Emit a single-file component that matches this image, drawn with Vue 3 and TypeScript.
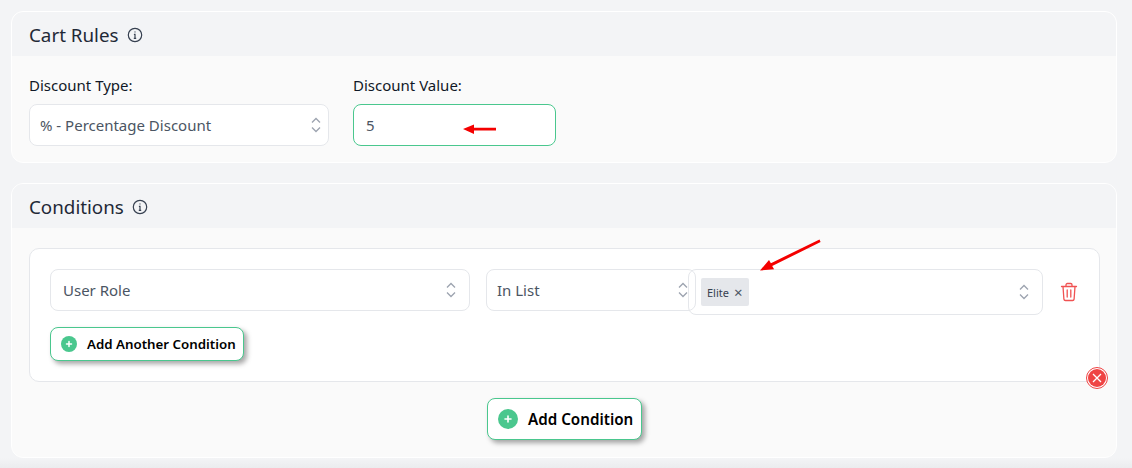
<script setup lang="ts">
const chevron = "M4 6.5 8 2.5l4 4M4 11.5l4 4 4-4";
</script>

<template>
  <div class="page">
    <section class="card first">
      <header class="card-head">
        <h2>Cart Rules</h2>
        <svg class="info" viewBox="0 0 16 16" fill="none" stroke="#374151" stroke-width="1.2">
          <circle cx="8" cy="8" r="6.7" />
          <path d="M6.9 7.3H8v4M6.8 11.3h2.4" />
          <circle cx="8" cy="4.9" r=".6" fill="#374151" stroke="none" />
        </svg>
      </header>
      <div class="card-body discount">
        <div class="field type">
          <label>Discount Type:</label>
          <div class="control select">
            <span>% - Percentage Discount</span>
            <svg class="chev" viewBox="0 0 16 18" fill="none" stroke="#9ca3af" stroke-width="1.3"><path :d="chevron" /></svg>
          </div>
        </div>
        <div class="field value">
          <label>Discount Value:</label>
          <div class="control input"><span>5</span></div>
        </div>
      </div>
    </section>

    <section class="card second">
      <header class="card-head">
        <h2>Conditions</h2>
        <svg class="info" viewBox="0 0 16 16" fill="none" stroke="#374151" stroke-width="1.2">
          <circle cx="8" cy="8" r="6.7" />
          <path d="M6.9 7.3H8v4M6.8 11.3h2.4" />
          <circle cx="8" cy="4.9" r=".6" fill="#374151" stroke="none" />
        </svg>
      </header>
      <div class="card-body conditions">
        <div class="group">
          <div class="row">
            <div class="control select role">
              <span>User Role</span>
              <svg class="chev" viewBox="0 0 16 18" fill="none" stroke="#9ca3af" stroke-width="1.3"><path :d="chevron" /></svg>
            </div>
            <div class="control select op">
              <span>In List</span>
              <svg class="chev" viewBox="0 0 16 18" fill="none" stroke="#9ca3af" stroke-width="1.3"><path :d="chevron" /></svg>
            </div>
            <div class="control multi">
              <span class="tag">Elite <i class="x">×</i></span>
              <svg class="chev" viewBox="0 0 16 18" fill="none" stroke="#9ca3af" stroke-width="1.3"><path :d="chevron" /></svg>
            </div>
            <svg class="trash" viewBox="0 0 18 20" fill="none" stroke="#f05252" stroke-width="1.3" stroke-linecap="round" stroke-linejoin="round">
              <path d="M1.5 4.5h15M6 4.5V2.8C6 2 6.6 1.5 7.3 1.5h3.4c.7 0 1.300.5 1.300 1.300v1.700M3 4.500l.9 12.600c.1.800.7 1.400 1.500 1.400h7.200c.8 0 1.400-.6 1.500-1.400L15 4.500M7.200 8v7M10.800 8v7" />
            </svg>
          </div>
          <button class="btn small" type="button">
            <span class="plus"><svg viewBox="0 0 16 16"><path d="M8 5.500v5M5.500 8h5" stroke="#fff" stroke-width="1.500" stroke-linecap="round" /></svg></span>
            Add Another Condition
          </button>
          <span class="remove">
            <svg viewBox="0 0 24 24" fill="none">
              <circle cx="12" cy="12" r="10.500" fill="#fff" stroke="#ef4444" />
              <circle cx="12" cy="12" r="9" fill="#ef4444" />
              <path d="m8 8 8 8M16 8l-8 8" stroke="#fff" stroke-width="1.300" />
            </svg>
          </span>
        </div>
        <button class="btn large" type="button">
          <span class="plus"><svg viewBox="0 0 20 20"><path d="M10 7v6M7 10h6" stroke="#fff" stroke-width="1.600" stroke-linecap="round" /></svg></span>
          Add Condition
        </button>
      </div>
    </section>

    <svg class="annot" viewBox="0 0 1132 468" fill="#f40000">
      <path d="M463 129l11-4.500v3.300h22v2.800h-22v3.300z" />
      <path d="M760 270.500l9-10.500 1.900 3.200 48.600-23.700 1.100 2.400-48.400 24.200 1.900 3.100z" />
    </svg>
  </div>
</template>

<style>
html, body { margin: 0; background: #f3f4f6; }
</style>

<style scoped>
.page {
  position: relative;
  width: 1132px;
  height: 468px;
  overflow: hidden;
  box-sizing: border-box;
  padding: 11px 15px 0 11px;
  background: linear-gradient(#f3f4f6 458px, #ebecee 468px);
  font-family: "Noto Sans", "Open Sans", sans-serif;
  color: #111827;
}
.card {
  border: 1px solid #fff;
  border-radius: 12px;
  overflow: hidden;
  background: #fafafa;
}
.first { height: 152px; box-sizing: border-box; }
.second { height: 275px; box-sizing: border-box; margin-top: 20px; overflow: visible; }
.card-head {
  height: 44px;
  box-sizing: border-box;
  display: flex;
  align-items: center;
  gap: 8px;
  padding: 1px 0 0 17px;
  background: #f3f4f6;
  border-radius: 11px 11px 0 0;
}
h2 { margin: 0; font-size: 18.800px; font-weight: 400; line-height: 24px; color: #1f2937; }
.info { width: 16px; height: 16px; }
.card-body { padding: 0 16px 0 17px; }
.discount { display: flex; gap: 24px; padding-top: 19px; }
.field label { display: block; font-size: 15px; line-height: 20px; margin-bottom: 9px; color: #111827; }
.type { width: 300px; }
.value { width: 203px; }
.control {
  box-sizing: border-box;
  height: 42px;
  display: flex;
  align-items: center;
  justify-content: space-between;
  background: #fff;
  border: 1px solid #e5e7eb;
  border-radius: 8px;
  font-size: 15px;
  color: #4b5563;
  padding: 0 10px 0 12px;
}
.type .control { padding: 0 4px 0 10px; }
.input { border-color: #4ac78e; }
.chev { width: 16px; height: 18px; flex: none; }
.conditions { position: relative; }
.group {
  position: relative;
  height: 134px;
  box-sizing: border-box;
  margin-top: 20px;
  padding: 20px 20px 0;
  border: 1px solid #e5e7eb;
  border-radius: 10px;
  background: #fff;
}
.row { display: flex; align-items: flex-start; }
.role { width: 420px; }
.op { width: 210px; margin-left: 16px; padding: 0 4px 0 10px; }
.multi {
  position: relative;
  width: 355px;
  height: 46px;
  margin-left: -8px;
  padding-left: 12px;
  background: transparent;
}
.tag {
  display: inline-flex;
  align-items: center;
  gap: 5px;
  height: 28px;
  padding: 0 6px;
  border-radius: 2px;
  background: #e5e7eb;
  font-size: 11px;
  color: #374151;
}
.x { font-style: normal; font-size: 15px; line-height: 1; color: #4b5563; }
.trash { width: 18px; height: 20px; margin: 13px 0 0 17px; }
.btn {
  display: flex;
  align-items: center;
  box-sizing: border-box;
  background: #fff;
  border: 1px solid #4ac78e;
  border-radius: 8px;
  box-shadow: 3px 3px 5px rgba(0, 0, 0, .35);
  font-family: inherit;
  font-weight: 600;
  color: #000;
  padding: 0;
}
.small {
  width: 194px;
  height: 34px;
  margin-top: 12px;
  padding-left: 10px;
  font-size: 13.300px;
  gap: 10px;
}
.large {
  width: 155px;
  height: 42px;
  margin: 16px auto 0;
  padding-left: 10px;
  font-size: 15.200px;
  gap: 10px;
}
.plus {
  display: flex;
  border-radius: 50%;
  background: #4ac78e;
  flex: none;
}
.small .plus, .small .plus svg { width: 16px; height: 16px; }
.large .plus, .large .plus svg { width: 20px; height: 20px; }
.remove {
  position: absolute;
  right: -10px;
  bottom: -9px;
  width: 24px;
  height: 24px;
}
.remove svg { display: block; width: 24px; height: 24px; }
.annot { position: absolute; left: 0; top: 0; width: 1132px; height: 468px; pointer-events: none; }
</style>
